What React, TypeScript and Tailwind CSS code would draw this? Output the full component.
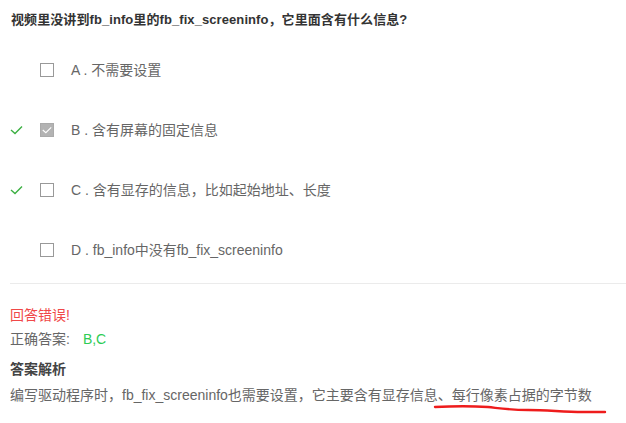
const font = "font-['Liberation_Sans','Noto_Sans_CJK_SC',sans-serif]"

const options = [
  { key: 'A', text: '不需要设置', checked: false, correct: false },
  { key: 'B', text: '含有屏幕的固定信息', checked: true, correct: true },
  { key: 'C', text: '含有显存的信息，比如起始地址、长度', checked: false, correct: true },
  { key: 'D', text: 'fb_info中没有fb_fix_screeninfo', checked: false, correct: false },
]

function Tick({ className }: { className?: string }) {
  return (
    <svg width="13" height="10" viewBox="0 0 13 10" className={className}>
      <path d="M1 5 L5 8.5 L12 1.5" fill="none" stroke="currentColor" strokeWidth="1.4" />
    </svg>
  )
}

export default function App() {
  return (
    <div className={`${font} w-[626px] h-[423px] bg-white overflow-hidden`}>
      <div className="pl-[11px] pt-[10px] text-[13px] leading-[20px] font-bold text-[#333] tracking-[0.08px]">
        视频里没讲到fb_info里的fb_fix_screeninfo，它里面含有什么信息?
      </div>

      <div className="mt-[10px]">
        {options.map((o) => (
          <div key={o.key} className="flex h-[60px] items-center">
            <div className="w-[40px] pl-[10px]">
              {o.correct && <Tick className="text-[#3cb043]" />}
            </div>
            {o.checked ? (
              <span className="flex h-[14px] w-[14px] items-center justify-center border border-[#aaa] bg-[#b3b3b3]">
                <Tick className="h-[8px] w-[10px] text-white" />
              </span>
            ) : (
              <span className="h-[14px] w-[14px] border border-[#999] bg-white" />
            )}
            <span className="ml-[17px] text-[14px] text-[#666]">
              {o.key} . {o.text}
            </span>
          </div>
        ))}
      </div>

      <div className="ml-[10px] mt-[3px] border-t border-[#ebebeb]" />

      <div className="px-[10px] pt-[21px] text-[14px] leading-[20px]">
        <div className="text-[#f04848]">回答错误!</div>
        <div className="mt-[4px] text-[#666]">
          正确答案:<span className="ml-[13px] text-[#2ecc55]">B,C</span>
        </div>
        <div className="mt-[10px] font-bold text-[#444]">答案解析</div>
        <div className="relative mt-[6px] text-[#666]">
          编写驱动程序时，fb_fix_screeninfo也需要设置，它主要含有显存信息、每行像素占据的字节数
          <svg className="absolute left-[423px] top-[19px]" width="175" height="12" viewBox="0 0 175 12">
            <path
              d="M2 3 C20 2 40 2 55 3 C65 4 75 6 95 6 C115 6 130 8 150 8 C160 8 168 8 172 8"
              fill="none"
              stroke="#ee1c1c"
              strokeWidth="2.4"
              strokeLinecap="round"
            />
          </svg>
        </div>
      </div>
    </div>
  )
}
